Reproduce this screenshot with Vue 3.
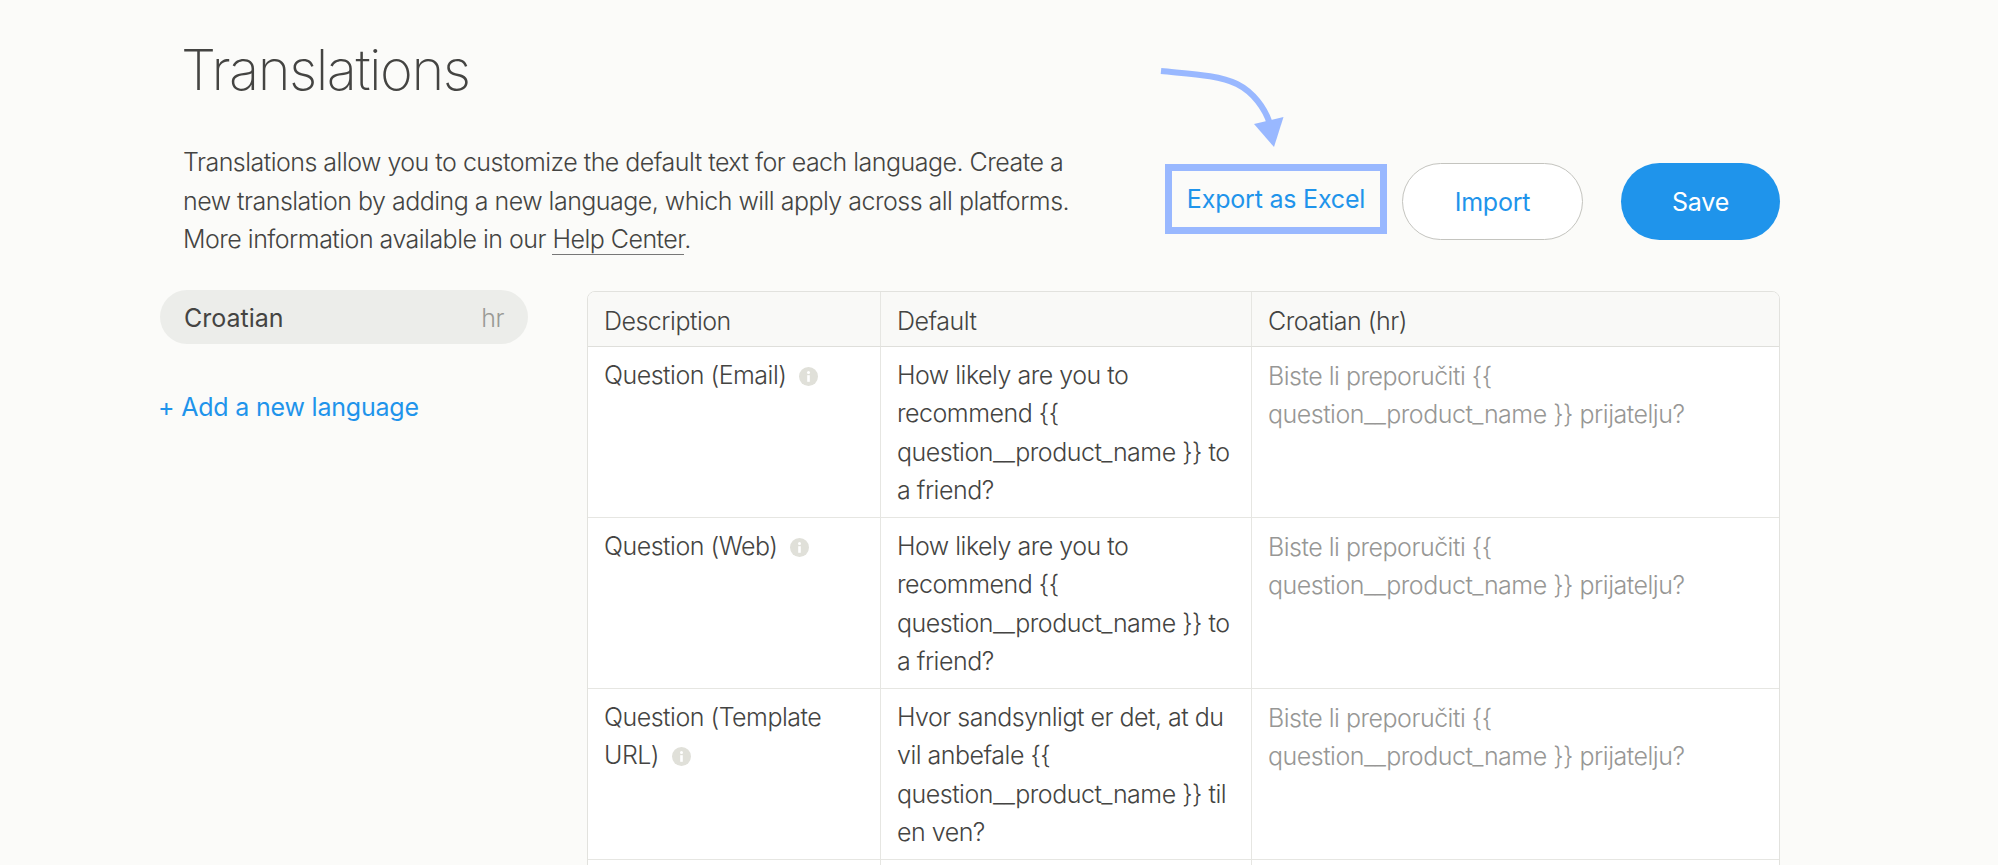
<script setup>
const rows = [
  { label: 'Question (Email)', text: 'How likely are you to recommend {{ question__product_name }} to a friend?' },
  { label: 'Question (Web)', text: 'How likely are you to recommend {{ question__product_name }} to a friend?' },
  { label: 'Question (Template URL)', text: 'Hvor sandsynligt er det, at du vil anbefale {{ question__product_name }} til en ven?' },
]
const translation = 'Biste li preporučiti {{ question__product_name }} prijatelju?'
</script>

<template>
  <main class="page">
    <h1 class="title">Translations</h1>
    <section class="intro">
      <p class="lead">
        Translations allow you to customize the default text for each language. Create a new translation by adding a new language, which will apply across all platforms. More information available in our <a class="help">Help Center</a>.
      </p>
      <div class="actions">
        <div class="export-wrap">
          <svg class="arrow" width="130" height="84" viewBox="0 0 130 84" aria-hidden="true">
            <path d="M0 3 C30 6 58 7 76 16 C92 24 104 40 109 56" fill="none" stroke="#99b8ff" stroke-width="6" />
            <path d="M93 56 L122.5 49 L113 79 Z" fill="#99b8ff" />
          </svg>
          <button class="export">Export as Excel</button>
        </div>
        <button class="import">Import</button>
        <button class="save">Save</button>
      </div>
    </section>
    <section class="content">
      <aside class="side">
        <div class="lang"><span class="lang-name">Croatian</span><span class="lang-code">hr</span></div>
        <a class="add">+ Add a new language</a>
      </aside>
      <div class="table">
        <div class="cell head">Description</div>
        <div class="cell head">Default</div>
        <div class="cell head last">Croatian (hr)</div>
        <template v-for="row in rows" :key="row.label">
          <div class="cell">
            {{ row.label }}
            <svg class="info" width="19" height="19" viewBox="0 0 19 19" aria-hidden="true">
              <circle cx="9.5" cy="9.5" r="9.5" fill="#e0e0d9" />
              <circle cx="9.5" cy="5.6" r="1.5" fill="#fff" />
              <rect x="8.2" y="8.2" width="2.6" height="6.6" fill="#fff" />
            </svg>
          </div>
          <div class="cell">{{ row.text }}</div>
          <div class="cell last muted">{{ translation }}</div>
        </template>
        <div class="cell spacer"></div>
        <div class="cell spacer"></div>
        <div class="cell spacer last"></div>
      </div>
    </section>
  </main>
</template>

<style scoped>
.page {
  width: 1998px;
  height: 865px;
  overflow: hidden;
  box-sizing: border-box;
  padding: 36px 218px 0 160px;
  background: #fbfbf9;
  color: #444442;
  font-family: Inter, "Liberation Sans", sans-serif;
  font-size: 25px;
  font-weight: 300;
  letter-spacing: -0.5px;
}
.title {
  margin: 0 0 0 21px;
  font-size: 56px;
  line-height: 68px;
  font-weight: 200;
  letter-spacing: -1.5px;
}
.intro {
  display: flex;
  margin-top: 39px;
  margin-left: 23px;
}
.lead {
  width: 920px;
  margin: 0;
  line-height: 38.5px;
  letter-spacing: -0.52px;
}
.help {
  border-bottom: 1px solid #777;
}
.actions {
  display: flex;
  align-items: flex-start;
  margin-left: 62px;
  margin-top: 20px;
}
.export-wrap {
  position: relative;
}
.arrow {
  position: absolute;
  left: -4px;
  top: -95px;
  overflow: visible;
}
button {
  font: inherit;
  font-weight: 400;
  letter-spacing: -0.2px;
  box-sizing: border-box;
  cursor: pointer;
}
.export {
  display: block;
  width: 222px;
  height: 70px;
  margin-top: 1px;
  padding: 0;
  border: 7px solid #99b8ff;
  background: transparent;
  color: #1f94eb;
}
.import {
  width: 181px;
  height: 77px;
  margin-left: 15px;
  border: 1px solid #c4c4bf;
  border-radius: 39px;
  background: #fff;
  color: #1f94eb;
}
.save {
  width: 159px;
  height: 77px;
  margin-left: 38px;
  border: 0;
  border-radius: 39px;
  background: #1f94eb;
  color: #fff;
}
.content {
  display: flex;
  align-items: flex-start;
  margin-top: 32px;
}
.side {
  width: 368px;
  margin-top: -1px;
  margin-right: 59px;
}
.lang {
  display: flex;
  justify-content: space-between;
  align-items: center;
  box-sizing: border-box;
  height: 54px;
  padding: 3px 24px 0 24px;
  border-radius: 27px;
  background: #ecedea;
}
.lang-name {
  font-weight: 400;
  letter-spacing: 0;
}
.lang-code {
  color: #9a9a96;
}
.add {
  display: block;
  margin-top: 48px;
  margin-left: -2px;
  color: #1f94eb;
  font-weight: 400;
  letter-spacing: -0.2px;
}
.table {
  display: grid;
  grid-template-columns: 293px 371px 1fr;
  width: 1193px;
  box-sizing: border-box;
  border: 1px solid #e2e2de;
  border-radius: 8px;
  background: #fff;
  overflow: hidden;
}
.cell {
  box-sizing: border-box;
  height: 171px;
  padding: 9px 16px 0;
  border-right: 1px solid #e6e6e2;
  border-bottom: 1px solid #e6e6e2;
  line-height: 38.5px;
}
.head {
  height: 55px;
  padding-top: 10px;
  background: #f9f9f7;
  border-bottom-color: #dfdfdb;
}
.last {
  border-right: 0;
}
.muted {
  padding-top: 10px;
  color: #979795;
}
.spacer {
  height: 30px;
}
.info {
  display: inline-block;
  vertical-align: -2px;
  margin-left: 6px;
}
</style>

<style>
html, body {
  margin: 0;
  height: 865px;
  overflow: hidden;
  background: #fbfbf9;
}
</style>
